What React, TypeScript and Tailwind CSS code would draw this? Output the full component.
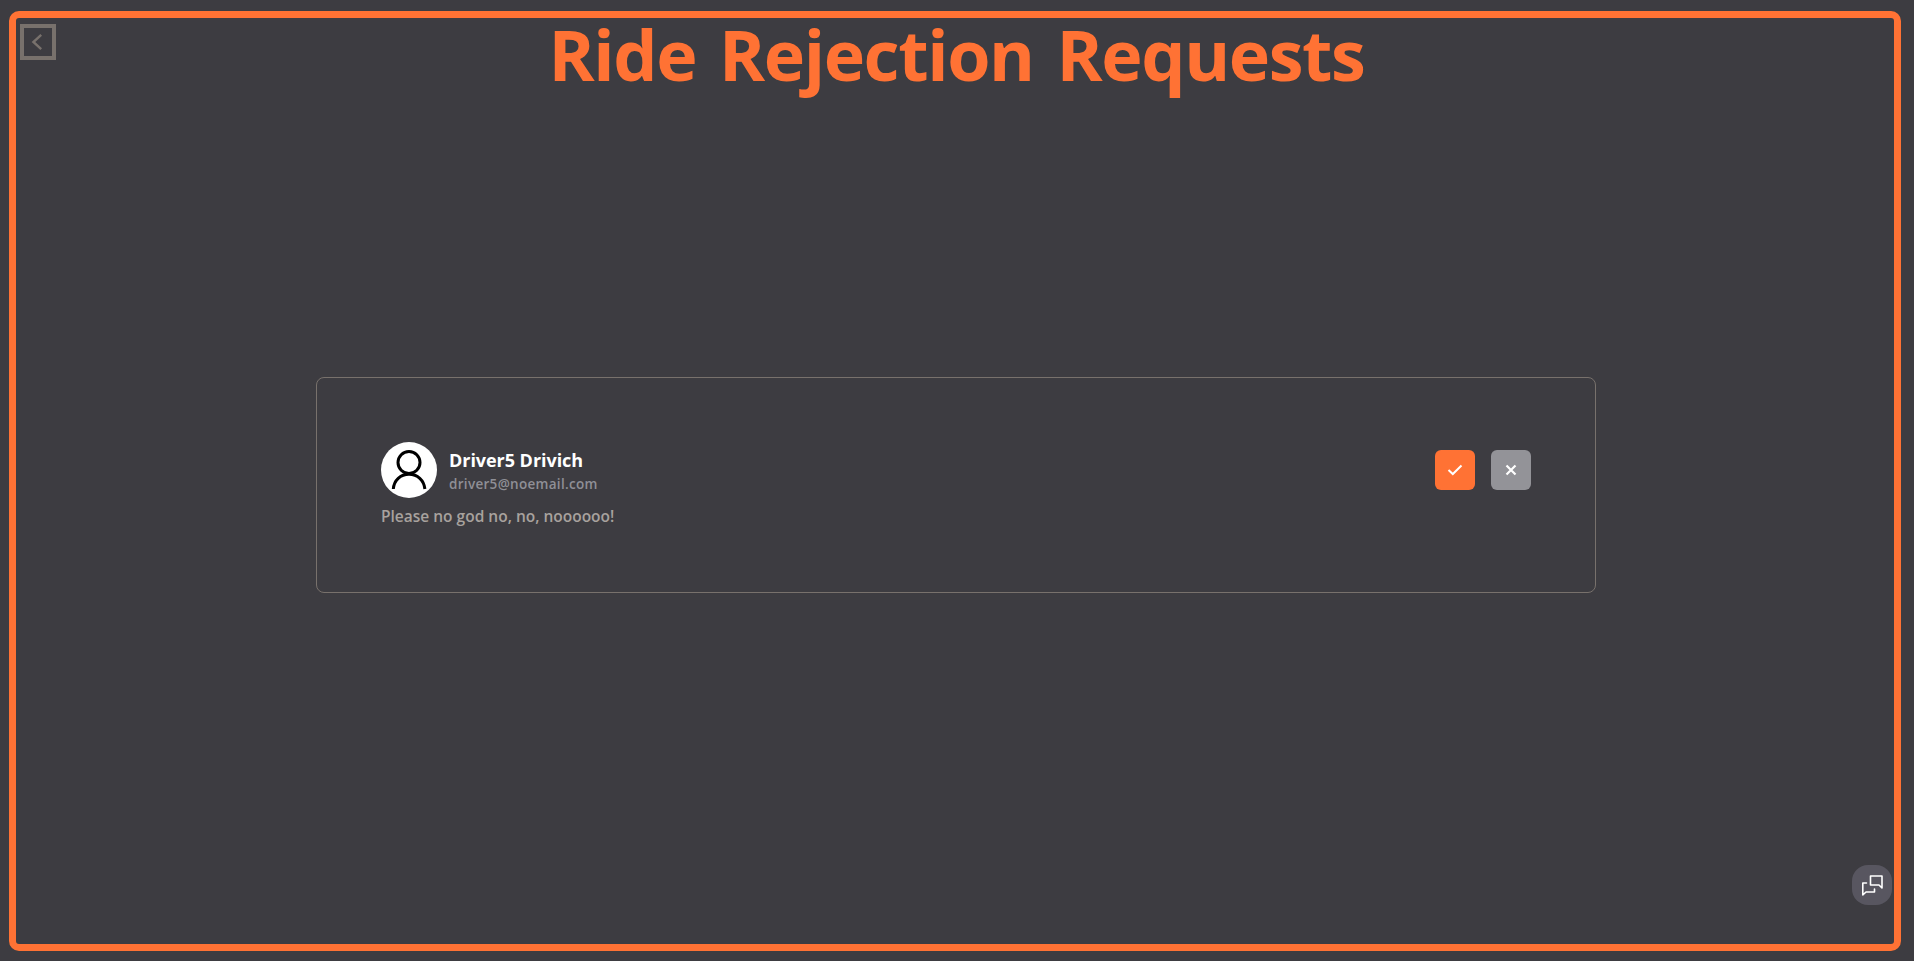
export default function App() {
  return (
    <div className="h-[961px] w-full overflow-hidden bg-[#3d3c41] pt-[11px] pl-[9px] font-['Open_Sans',sans-serif]">
      <main className="relative flex h-[940px] w-[1892px] flex-col rounded-[10px] border-[7px] border-[#ff7234]">
        <button aria-label="Back" className="absolute top-[6px] left-[4px] flex size-9 items-center justify-center border-4 border-[#78716c]">
          <svg width="28" height="28" viewBox="0 0 28 28" fill="none" stroke="#78716c" strokeWidth="2.400">
            <path d="M17.200 6.800 9.400 14l7.800 7.200" />
          </svg>
        </button>
        <h1 className="h-[73px] pl-[3px] text-center text-[70px] leading-[73px] font-bold tracking-[-1.4px] [word-spacing:6px] whitespace-nowrap text-[#ff7234]">
          Ride Rejection Requests
        </h1>
        <section className="mt-[286px] ml-[300px] flex h-[216px] w-[1280px] items-start justify-between rounded-lg border border-[#78716c] p-16">
          <div>
            <div className="flex items-center gap-3">
              <svg width="56" height="56" viewBox="0 0 56 56" fill="none" stroke="#000" strokeWidth="3">
                <circle cx="28" cy="28" r="28" fill="#fff" stroke="none" />
                <circle cx="28" cy="20.500" r="11" />
                <path d="M12.300 47C13 38 19.500 32.300 28 32.300S43 38 43.900 47" />
              </svg>
              <div className="pt-px">
                <p className="h-6 text-[18px] leading-[23px] font-bold tracking-[-0.050px] whitespace-nowrap text-white">Driver5 Drivich</p>
                <p className="h-5 text-[13.500px] leading-[22px] font-semibold tracking-[0.300px] whitespace-nowrap text-[#8f8f96]">driver5@noemail.com</p>
              </div>
            </div>
            <p className="mt-[6px] text-[15.500px] leading-6 font-semibold whitespace-nowrap text-[#a8a29e]">Please no god no, no, noooooo!</p>
          </div>
          <div className="mt-2 flex gap-4">
            <button aria-label="Accept" className="flex size-10 items-center justify-center rounded-md bg-[#ff7234]">
              <svg width="16" height="16" viewBox="0 0 16 16" fill="none" stroke="#fff" strokeWidth="2">
                <path d="m1.500 8 4.300 4 8.700-8.500" />
              </svg>
            </button>
            <button aria-label="Reject" className="flex size-10 items-center justify-center rounded-md bg-[#939398]">
              <svg width="16" height="16" viewBox="0 0 16 16" fill="none" stroke="#fff" strokeWidth="2.200">
                <path d="m3.500 3.500 9 9m0-9-9 9" />
              </svg>
            </button>
          </div>
        </section>
        <button aria-label="Chat" className="absolute top-[847px] left-[1836px] flex size-10 items-center justify-center rounded-2xl bg-[#585660]">
          <svg width="24" height="24" viewBox="0 0 24 24" fill="none" stroke="#fff" strokeWidth="1.600" strokeLinejoin="round" strokeLinecap="round">
            <path d="M10.500 3h11.500v12L19 12h-8.500z" />
            <path d="M6.500 10H2.800v12L6 19h8.500v-3" />
          </svg>
        </button>
      </main>
    </div>
  );
}
